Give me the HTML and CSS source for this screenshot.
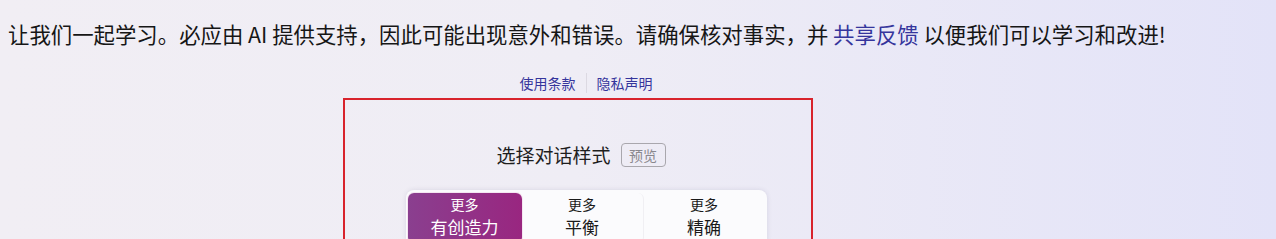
FILE: index.html
```html
<!DOCTYPE html>
<html lang="zh-CN">
<head>
<meta charset="utf-8">
<title>必应</title>
<link rel="stylesheet" href="styles.css">
</head>
<body>
<div class="page">
  <p class="notice">让我们一起学习。必应由 AI 提供支持，因此可能出现意外和错误。请确保核对事实，并 <a class="notice-link" href="#">共享反馈</a> 以便我们可以学习和改进!</p>
  <div class="stage">
    <nav class="links">
      <a class="link" href="#">使用条款</a>
      <span class="sep"></span>
      <a class="link" href="#">隐私声明</a>
    </nav>
    <div class="title-row">
      <span class="title">选择对话样式</span>
      <span class="badge">预览</span>
    </div>
    <div class="tones">
      <button class="tone tone-active"><span class="tone-sub">更多</span><span class="tone-main">有创造力</span></button>
      <button class="tone"><span class="tone-sub">更多</span><span class="tone-main">平衡</span></button>
      <button class="tone tone-last"><span class="tone-sub">更多</span><span class="tone-main">精确</span></button>
    </div>
  </div>
  <div class="highlight"></div>
</div>
</body>
</html>
```

FILE: styles.css
```css
html, body {
  margin: 0;
  padding: 0;
  height: 100%;
}
body {
  font-family: "Noto Sans CJK SC", "Noto Sans", sans-serif;
  color: #1a1a1a;
  background: linear-gradient(90deg, #f1eef4 0%, #efedf5 45%, #e3e3f8 100%);
  overflow: hidden;
}
.page {
  position: relative;
  height: 239px;
}
.notice {
  margin: 0;
  padding: 18px 0 0 8px;
  font-size: 21.4px;
  line-height: 32px;
  white-space: nowrap;
  color: #161616;
}
.notice-link {
  color: #35359c;
  text-decoration: none;
}
.stage {
  width: 1172px;
  display: flex;
  flex-direction: column;
  align-items: center;
}
.links {
  margin-top: 23px;
  display: flex;
  align-items: center;
  height: 20px;
}
.link {
  font-size: 14px;
  line-height: 20px;
  color: #35359c;
  text-decoration: none;
}
.sep {
  width: 1px;
  height: 20px;
  background: #dcd9e2;
  margin: 0 10px;
}
.title-row {
  margin-top: 50px;
  display: flex;
  align-items: center;
  gap: 10px;
  height: 24px;
  padding-right: 10px;
}
.title {
  font-size: 19px;
  line-height: 24px;
  color: #1e1e1e;
}
.badge {
  box-sizing: border-box;
  height: 24px;
  width: 45px;
  border: 1px solid #a9a7ad;
  border-radius: 4px;
  font-size: 14px;
  line-height: 22px;
  color: #8a888d;
  text-align: center;
}
.tones {
  margin-top: 23px;
  width: 361px;
  box-sizing: border-box;
  padding: 3px 2px;
  display: flex;
  background: #fbfbfd;
  border-radius: 8px;
  box-shadow: 0 0 5px rgba(60, 50, 90, 0.12);
}
.tone {
  flex: 1;
  border: 0;
  background: transparent;
  padding: 1px 0 4px;
  display: flex;
  flex-direction: column;
  align-items: center;
  font-family: inherit;
  color: #1a1a1a;
  border-radius: 6px;
  border-right: 1px solid #f0eff3;
}
.tone-last {
  border-right: 0;
}
.tone-active {
  flex: 0 0 114px;
  color: #ffffff;
  background: linear-gradient(90deg, #8a3f8f 0%, #992680 100%);
  border-right: 0;
  box-shadow: 0 0 0 1px #f4e6f1;
}
.tone-sub {
  font-size: 14px;
  line-height: 20px;
}
.tone-main {
  font-size: 17px;
  line-height: 25px;
}
.highlight {
  position: absolute;
  left: 343px;
  top: 98px;
  width: 470px;
  height: 200px;
  box-sizing: border-box;
  border: 2px solid #d8232c;
  pointer-events: none;
}
```
